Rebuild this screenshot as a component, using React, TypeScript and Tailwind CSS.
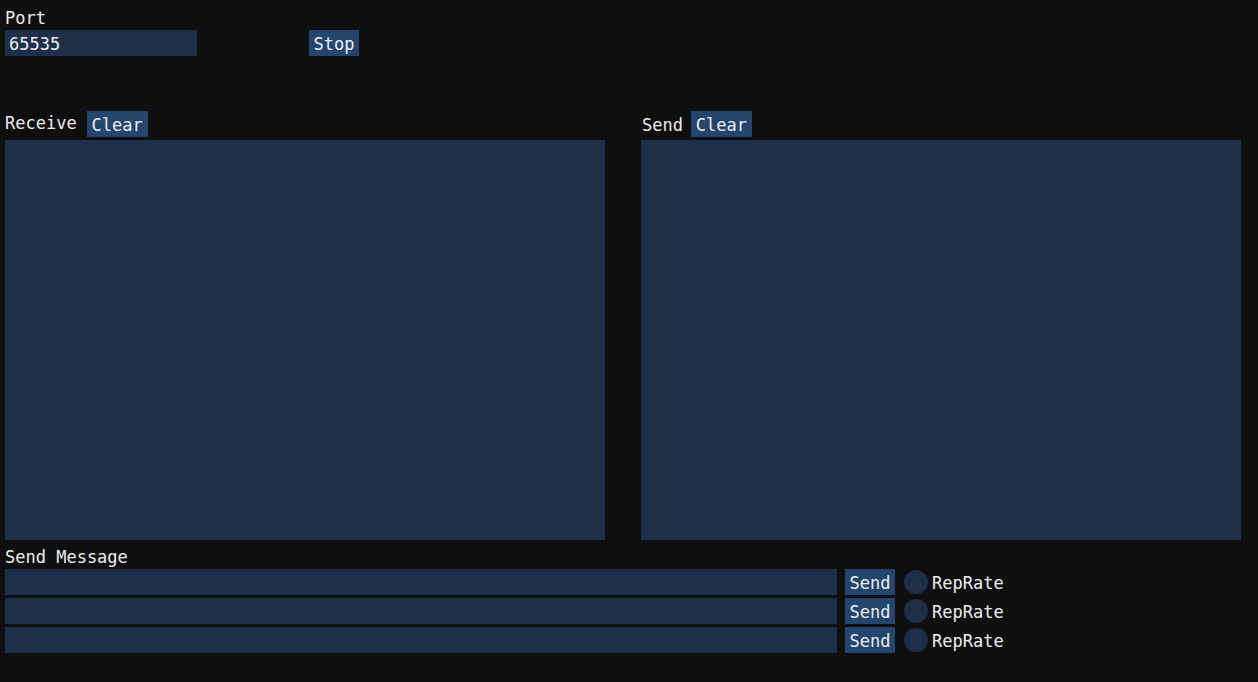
import React from 'react';

const font = { fontFamily: '"DejaVu Sans Mono", "Liberation Mono", monospace' };

const Button: React.FC<{ label: string; className?: string }> = ({ label, className = '' }) => (
  <button
    className={`h-[26px] px-[4px] bg-[#24456d] text-[#eeeeee] text-[17px] leading-[28px] ${className}`}
  >
    {label}
  </button>
);

const SendRow: React.FC = () => (
  <div className="flex items-center h-[26px]">
    <div className="w-[832px] h-[26px] bg-[#1d2f49]" />
    <Button label="Send" className="ml-[8px] w-[50px]" />
    <div className="ml-[9px] w-[24px] h-[24px] rounded-full bg-[#1d2f49]" />
    <span className="ml-[4px] mt-[2px] text-[17px] leading-[19px]">RepRate</span>
  </div>
);

export default function App() {
  return (
    <div className="w-full h-[682px] bg-[#0f0f0f] px-[5px] text-[#eeeeee] overflow-hidden" style={font}>
      {/* Port */}
      <div className="pt-[9px] text-[17px] leading-[19px]">Port</div>
      <div className="mt-[2px] flex items-center">
        <div className="w-[192px] h-[26px] bg-[#1d2f49] px-[4px] text-[17px] leading-[28px]">65535</div>
        <Button label="Stop" className="ml-[112px] w-[50px]" />
      </div>

      {/* Receive / Send panes */}
      <div className="mt-[55px] flex gap-[36px]">
        <div className="flex flex-col">
          <div className="flex items-start h-[26px]">
            <span className="mt-[3px] text-[17px] leading-[19px]">Receive</span>
            <Button label="Clear" className="ml-[10px] w-[61px]" />
          </div>
          <div className="mt-[3px] w-[600px] h-[400px] bg-[#1d2f49]" />
        </div>
        <div className="flex flex-col">
          <div className="flex items-start h-[26px]">
            <span className="ml-[1px] mt-[5px] text-[17px] leading-[19px]">Send</span>
            <Button label="Clear" className="ml-[8px] w-[61px]" />
          </div>
          <div className="mt-[3px] w-[600px] h-[400px] bg-[#1d2f49]" />
        </div>
      </div>

      {/* Send Message */}
      <div className="mt-[8px] text-[17px] leading-[19px]">Send Message</div>
      <div className="mt-[2px] flex flex-col gap-[3px]">
        <SendRow />
        <SendRow />
        <SendRow />
      </div>
    </div>
  );
}
